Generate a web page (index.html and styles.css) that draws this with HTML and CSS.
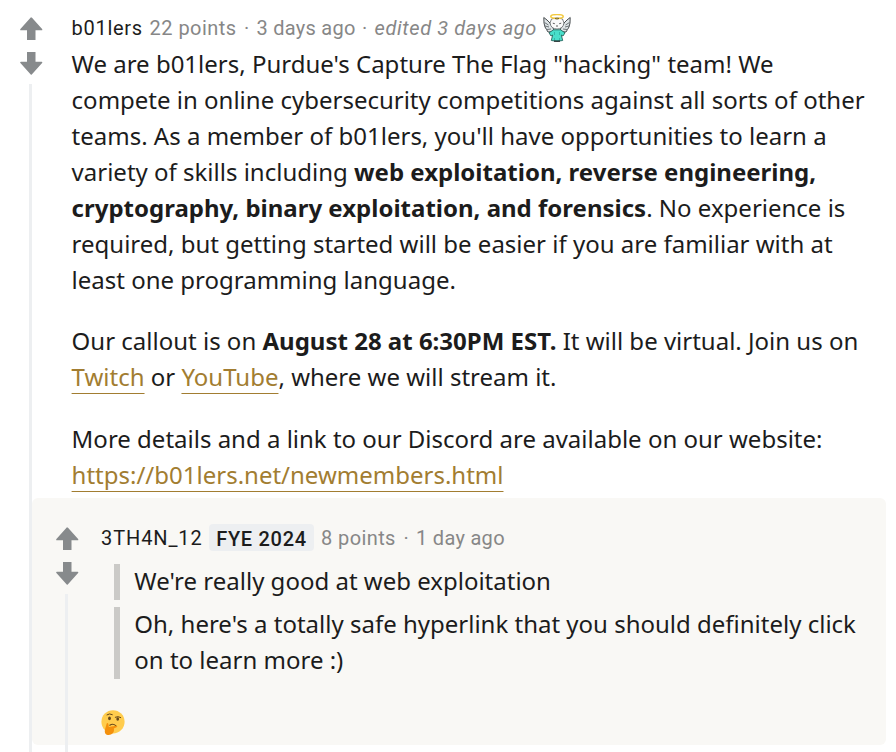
FILE: index.html
```
<!DOCTYPE html>
<html lang="en">
<head>
<meta charset="utf-8">
<title>b01lers thread</title>
<link rel="stylesheet" href="styles.css">
</head>
<body>
<svg width="0" height="0" class="defs"><defs><path id="arrow" d="M11 .3Q11.5 .3 12 .8L22.1 12Q22.8 13.3 21.6 13.3H15.5V23H7V13.3H.9Q-.3 13.3 .4 12L10.5 .8Z"/></defs></svg>
<article class="comment">
  <aside class="rail">
    <svg class="vote" viewBox="0 0 23 23"><use href="#arrow"/></svg>
    <svg class="vote down" viewBox="0 0 23 23"><use href="#arrow"/></svg>
    <div class="thread"></div>
  </aside>
  <div class="content">
    <header class="meta">
      <span class="name user-a">b01lers</span><span class="points-a">22 points</span><span class="dot">·</span><span class="time-a">3 days ago</span><span class="dot">·</span><em class="edited">edited 3 days ago</em>
      <svg class="angel" viewBox="0 0 28 28">
        <g fill="#dfe5e7" stroke="#484d50" stroke-width="1" stroke-linejoin="round">
          <path d="M11 17.500L5 18 3.500 15.500 2 13 1 9 .8 3.500 4 6 7 9l3 4ZM17 17.500l6 .5 1.500-2.500L26 13l1-4 .2-5.500L24 6l-3 3-3 4Z"/>
          <path d="M2 12l4 1M1.500 8.500l4 2.500M4 15.500l4-.5M26 12l-4 1M26.500 8.500l-4 2.500M24 15.500l-4-.5" fill="none" stroke="#6d7477" stroke-width="1"/>
          <path d="M8.500 5Q14 2.500 19.500 5L21 9Q20 15 14 15T7 9Z" fill="#fafafa" stroke-width=".7"/>
          <path d="M10.500 15.800h7l4.500 3-2 3.200-1.700-1 1.400 5.500q-5.700 1.500-11.400 0L9.700 21 8 22l-2-3.200Z" fill="#48dfca" stroke="#27665f" stroke-width=".9"/>
        </g>
        <path d="M9.800 9.200l2 .5M16.200 9.700l2-.5M13 12h2" stroke="#333" stroke-width=".8" fill="none"/>
        <path d="M11.500 18v3M16.500 18v3M11.500 24v2M16.500 24v2" stroke="#2caf9f" stroke-width=".8" fill="none"/>
        <ellipse cx="14" cy="2.500" rx="6.200" ry="1.900" fill="none" stroke="#f3c93e" stroke-width="1.500"/>
        <path d="M12 4.500q2 1 4 0" fill="none" stroke="#493d24" stroke-width=".8"/>
        <path d="M11 26.500h6v1.300h-6Z" fill="#272b2d"/>
      </svg>
    </header>
    <div class="text">
      <p>We are b01lers, Purdue's Capture The Flag "hacking" team! We compete in online cybersecurity competitions against all sorts of other teams. As a member of b01lers, you'll have opportunities to learn a variety of skills including <strong>web exploitation, reverse engineering, cryptography, binary exploitation, and forensics</strong>. No experience is required, but getting started will be easier if you are familiar with at least one programming language.</p>
      <p>Our callout is on <strong>August 28 at 6:30PM EST.</strong> It will be virtual. Join us on <a href="#">Twitch</a> or <a href="#">YouTube</a>, where we will stream it.</p>
      <p>More details and a link to our Discord are available on our website: <a href="#">https://b01lers.net/newmembers.html</a></p>
    </div>
    <article class="comment reply">
      <aside class="rail">
        <svg class="vote" viewBox="0 0 23 23"><use href="#arrow"/></svg>
        <svg class="vote down" viewBox="0 0 23 23"><use href="#arrow"/></svg>
        <div class="thread"></div>
      </aside>
      <div class="content">
        <header class="meta">
          <span class="name user-b">3TH4N_12</span><span class="flair">FYE 2024</span><span class="points-b">8 points</span><span class="dot">·</span><span class="time-b">1 day ago</span>
        </header>
        <div class="text">
          <blockquote>We're really good at web exploitation</blockquote>
          <blockquote>Oh, here's a totally safe hyperlink that you should definitely click on to learn more :)</blockquote>
          <svg class="thinking" viewBox="0 0 24 25">
            <circle cx="12" cy="11.800" r="11.600" fill="#ffcc4d"/>
            <g fill="none" stroke="#65471b" stroke-linecap="round">
              <path d="M6 4.800Q8.500 3 11.300 4.600M14.300 7.200Q17 5.800 19.700 7.500" stroke-width="1"/>
              <path d="M8.800 15.200Q12 13 15 15.800" stroke-width="1.100"/>
            </g>
            <ellipse cx="8.500" cy="8.300" rx="1.400" ry="1.900" fill="#65471b"/>
            <ellipse cx="16.700" cy="9" rx="1.400" ry="1.800" fill="#65471b"/>
            <path d="M5.700 13.400Q7 12.500 7.400 14.200L7.800 17 15.200 15.700Q16.800 15.900 16 17.100L12.800 18.600Q13.500 21 11.800 23.200 9 26 5.200 24.400 3 23 4.200 18.800Z" fill="#f4900c"/>
          </svg>
        </div>
      </div>
    </article>
  </div>
</article>
</body>
</html>
```
FILE: styles.css
```
* { box-sizing: border-box; }
body { margin: 0; height: 752px; overflow: hidden; background: #fff; color: #1c1c1c; font-family: "Noto Sans", sans-serif; }
.defs { display: block; }
.comment { display: flex; height: 752px; padding-right: 10px; }
.rail { flex: 0 0 62px; display: flex; flex-direction: column; align-items: center; padding-top: 17px; }
.vote { display: block; flex: none; width: 23px; height: 23px; fill: #878a8c; }
.vote.down { margin: 12px 0 9px; transform: scaleY(-1); }
.thread { width: 3px; flex: 1; margin-right: 2px; background: #edeff1; }
.content { flex: 1; min-width: 0; padding-left: 9.6px; }
.meta { display: flex; align-items: center; height: 46px; padding-top: 10px; font: 20px/28px Roboto, sans-serif; color: #878787; white-space: nowrap; }
.meta > * { flex: none; }
.name { color: #1c1c1c; }
.user-a { width: 78px; letter-spacing: .7px; }
.points-a { width: 87px; letter-spacing: .45px; }
.dot { width: 20px; text-align: center; }
.time-a { width: 98px; letter-spacing: .25px; }
.edited { width: 164px; letter-spacing: .6px; }
.angel { width: 28px; height: 28px; margin-left: 4px; }
.text { font-size: 24px; line-height: 36px; }
p { margin: 0 12px 25px 0; }
p + p { margin-bottom: 26px; }
.content > .text > p:last-child { margin-bottom: 5px; }
a { color: #a27d31; text-decoration: underline 1px; text-underline-offset: 7px; text-decoration-skip-ink: none; }
.reply { height: 247px; margin-left: -39.6px; padding: 0 0 0 4px; border-radius: 6px; background: #f9f8f5; }
.reply > .rail { margin-bottom: -7px; padding-top: 29px; }
.reply > .content { padding-left: 3px; }
.reply .meta { height: 65px; padding-top: 15px; }
.user-b { width: 108px; letter-spacing: .9px; }
.flair { width: 105px; height: 27px; margin-bottom: 2px; border-radius: 4px; background: #edeff1; color: #1c1c1c; font-weight: 500; line-height: 30px; text-align: center; letter-spacing: .7px; }
.points-b { width: 75px; margin-left: 7px; letter-spacing: .4px; }
.time-b { letter-spacing: .3px; }
blockquote { margin: 0 0 6px 13px; padding: 0 10px 1px 20.3px; background: linear-gradient(#cbcac7, #cbcac7) 0 1px / 6px 100% no-repeat; }
.thinking { display: block; width: 24px; height: 25px; margin-top: 31px; }
```
